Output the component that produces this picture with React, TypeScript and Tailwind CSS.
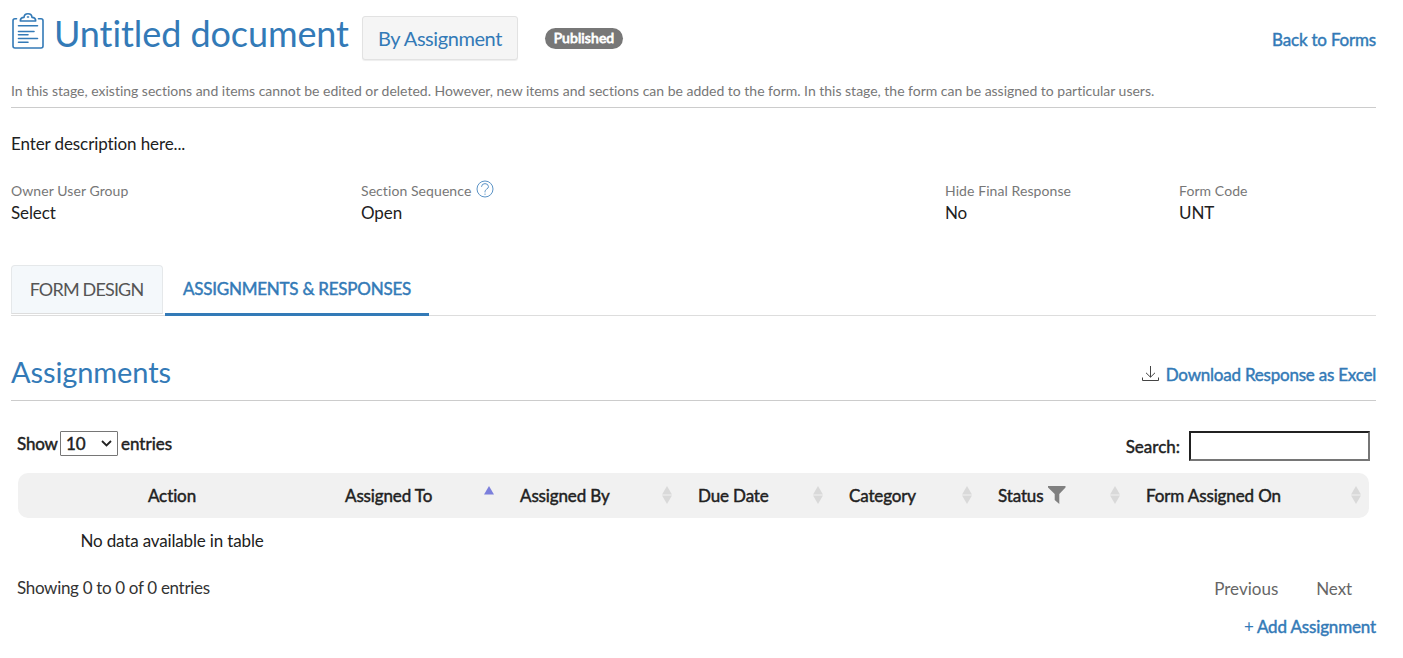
import React from "react";

const strong = "[-webkit-text-stroke:0.45px_currentColor]";

function ClipboardIcon() {
  return (
    <svg width="34" height="38" viewBox="0 0 34 38" fill="none" stroke="#337ab7" strokeWidth="1.6" className="shrink-0" strokeLinecap="round" strokeLinejoin="round">
      <path d="M5.5 6.8H4Q2 6.8 2 8.8V34Q2 36 4 36H30Q32 36 32 34V8.8Q32 6.8 30 6.8H27.5" />
      <path d="M9.3 9Q9.3 5.6 13 5.4Q13.2 1.7 17 1.7Q20.8 1.7 21 5.4Q24.7 5.6 24.7 9Z" />
      <path d="M16.5 5H17.5M7.5 13.7H26.5M7.5 19.5H23M7.5 22.8H17M7.5 26.5H26.5M7.5 30.2H17" />
    </svg>
  );
}

function HelpIcon() {
  return (
    <svg width="18" height="18" viewBox="0 0 18 18" fill="none" stroke="#5b93c6" strokeWidth="1">
      <circle cx="9" cy="9" r="8" />
      <path d="M5.5 6.8Q5.7 3.6 9 3.6T12.5 6.7Q12.5 8 10.6 9.2Q9 10.2 9 11.7V12.4M9 13.6V14.8" />
    </svg>
  );
}

function SortIcon({ active }: { active?: boolean }) {
  return (
    <svg width="10" height="18" viewBox="0 0 10 18" className="absolute right-2 top-[13px]">
      <path d="M0 8.5L5 0L10 8.5Z" fill={active ? "#7b7fdc" : "#d9d9d9"} />
      {!active && <path d="M0 9.5L5 18L10 9.5Z" fill="#d9d9d9" />}
    </svg>
  );
}

const columns = [
  { label: "Assigned To", width: "w-[175px]", active: true },
  { label: "Assigned By", width: "w-[178px]" },
  { label: "Due Date", width: "w-[151px]" },
  { label: "Category", width: "w-[149px]" },
  { label: "Status", width: "w-[148px]", filter: true },
  { label: "Form Assigned On", width: "w-[241px]" },
];

function Field({ label, value, width, help }: { label: string; value: string; width: string; help?: boolean }) {
  return (
    <div className={width}>
      <div className="flex h-[22px] items-center text-[14px] tracking-[0.08px] text-[#777]">
        <span>{label}</span>
        {help && <span className="-mt-1 ml-[5px]"><HelpIcon /></span>}
      </div>
      <div className="flex h-[22px] items-center text-[17px] tracking-[-0.1px]">{value}</div>
    </div>
  );
}

export default function App() {
  return (
    <main className="h-[658px] w-[1403px] overflow-hidden bg-white pl-[11px] pr-[27px] font-[Lato,sans-serif] text-[17px] leading-[22px] text-[#212121] [font-variant-ligatures:none]">
      <header className="flex h-[80px] items-start text-[#337ab7]">
        <div className="pt-3"><ClipboardIcon /></div>
        <h1 className="ml-[8px] w-[309px] whitespace-nowrap pl-px pt-[10px] text-[36px] leading-[46px] tracking-[-0.08px]">Untitled document</h1>
        <button className="mt-4 h-[44px] w-[156px] rounded-[3px] border border-[#e2e2e2] bg-[#f5f5f5] text-[20px] tracking-[-0.43px] shadow-[0_1px_1px_#eee]">By Assignment</button>
        <span className="ml-[27px] mt-[28px] flex h-[21px] w-[78px] items-center justify-center rounded-full bg-[#777] pb-px text-[14px] tracking-[0.1px] text-white [-webkit-text-stroke:0.8px_currentColor]">Published</span>
        <a className={`ml-auto mt-[29px] tracking-[-0.2px] ${strong}`}>Back to Forms</a>
      </header>
      <p className="h-[28px] border-b border-[#ccc] text-[14px] tracking-[-0.012px] text-[#777]">
        In this stage, existing sections and items cannot be edited or deleted. However, new items and sections can be added to the form. In this stage, the form can be assigned to particular users.
      </p>
      <p className="mt-[25px] tracking-[-0.1px]">Enter description here...</p>
      <div className="mt-[25px] flex">
        <Field label="Owner User Group" value="Select" width="w-[350px]" />
        <Field label="Section Sequence" value="Open" width="w-[584px]" help />
        <Field label="Hide Final Response" value="No" width="w-[234px]" />
        <Field label="Form Code" value="UNT" width="w-[180px]" />
      </div>
      <nav className="mt-[41px] flex h-[51px] border-b border-[#ddd]">
        <a className="flex h-[49px] w-[152px] items-center justify-center rounded-t-[4px] border border-[#e5e8ea] border-b-[#ddd] bg-[#f4f8fb] pb-px pr-px text-[18px] tracking-[-0.83px] text-[#555]">FORM DESIGN</a>
        <a className={`ml-0.5 flex h-[51px] w-[264px] items-center border-b-3 border-[#337ab7] pl-[18px] tracking-[-0.24px] text-[#337ab7] ${strong}`}>ASSIGNMENTS &amp; RESPONSES</a>
      </nav>
      <section className="flex h-[85px] items-start justify-between border-b border-[#ccc] text-[#337ab7]">
        <h2 className="pt-[37px] text-[29px] leading-[38px] tracking-[-0.1px]">Assignments</h2>
        <a className="mt-[48px] flex items-center">
          <svg width="18" height="16" viewBox="0 0 18 16" fill="none" stroke="#444" className="-mt-0.5 mr-[6px]">
            <path d="M8.5 0V11M4 6.8L8.5 11.2L13 6.8M0.5 11.5V14.5H16.5V11.5" />
          </svg>
          <span className={`tracking-[-0.22px] ${strong}`}>Download Response as Excel</span>
        </a>
      </section>
      <div className="mt-[30px] flex h-[42px] items-start justify-between pl-[5px] pr-[6px]">
        <label className={`flex items-center ${strong}`}>
          <span className="w-[41px] pl-px tracking-[-0.2px]">Show</span>
          <span className="mx-[3px] flex h-[25px] w-[58px] items-center justify-between rounded-[1px] border border-[#767676] pl-[5px] pr-[5px] tracking-[-0.2px]">
            10
            <svg width="11" height="7" viewBox="0 0 11 7" fill="none" stroke="#222" strokeWidth="1.8"><path d="M1 1L5.5 5.5L10 1" /></svg>
          </span>
          entries
        </label>
        <label className={`flex items-center ${strong}`}>
          <span className="mt-0.5">Search:</span>
          <input className="ml-[9px] h-[30px] w-[181px] border-2 border-[#767676] border-l-[#212121] border-t-[#212121] bg-white" />
        </label>
      </div>
      <table className="ml-[7px] w-[1351px] table-fixed border-separate border-spacing-0">
        <thead>
          <tr className="h-[45px]">
            <th className={`w-[309px] rounded-l-[10px] bg-[#f1f1f1] pr-px text-center font-normal tracking-[-0.1px] ${strong}`}>Action</th>
            {columns.map((c) => (
              <th key={c.label} className={`relative bg-[#f1f1f1] pl-[18px] text-left font-normal tracking-[-0.13px] last:rounded-r-[10px] ${c.width} ${strong}`}>
                <span className="flex items-center">
                  {c.label}
                  {c.filter && (
                    <svg width="18" height="18" viewBox="0 0 18 18" className="-mt-0.5 ml-[5px]" fill="#808080"><path d="M0 0H17.5V1.5L11.3 8V18L6.7 14V8L0 1.5Z" /></svg>
                  )}
                </span>
                <SortIcon active={c.active} />
              </th>
            ))}
          </tr>
        </thead>
        <tbody>
          <tr className="h-[46px]"><td className="pr-px text-center tracking-[-0.15px]">No data available in table</td></tr>
        </tbody>
      </table>
      <div className="mt-[13px] flex h-[39px] items-start pl-[6px] pr-6">
        <span className="tracking-[-0.32px] text-[#333]">Showing 0 to 0 of 0 entries</span>
        <span className="ml-auto mt-px text-[#666]">Previous</span>
        <span className="ml-[38px] mt-px tracking-[-0.1px] text-[#666]">Next</span>
      </div>
      <a className="flex justify-end text-[#337ab7]"><span className="mr-[3px]">+</span><span className={`tracking-[-0.15px] ${strong}`}>Add Assignment</span></a>
    </main>
  );
}
